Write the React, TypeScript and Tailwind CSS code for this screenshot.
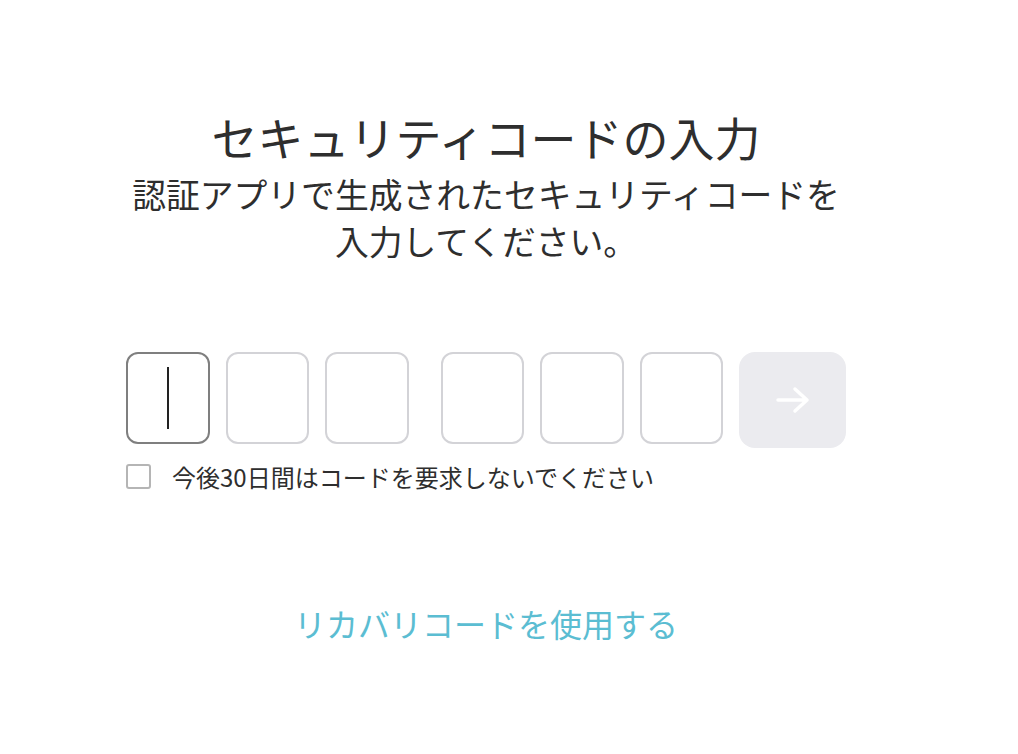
import { useState } from "react";

const font = { fontFamily: '"Noto Sans CJK JP", "Noto Sans", sans-serif' };

const CodeBox = ({ active }: { active?: boolean }) => (
  <div
    className={
      "flex h-[92px] w-[83.5px] items-center justify-center rounded-[12px] border-2 bg-white " +
      (active ? "border-[#7f7f7f]" : "border-[#d3d3d7]")
    }
  >
    {active && <div className="h-[62px] w-[2px] bg-[#222]" />}
  </div>
);

export default function App() {
  const [remember, setRemember] = useState(false);

  return (
    <div className="min-h-[754px] w-full bg-white text-[#2e2e2e]" style={font}>
      <div className="ml-[126px] flex w-[720px] flex-col items-center pt-[108px]">
        <h1 className="text-[46px] leading-[56px] font-normal">セキュリティコードの入力</h1>
        <p className="mt-[6px] text-center text-[33.8px] leading-[47px]">
          認証アプリで生成されたセキュリティコードを
          <br />
          入力してください。
        </p>

        <div className="mt-[88px] flex w-full items-start">
          <div className="flex gap-4">
            <CodeBox active />
            <CodeBox />
            <CodeBox />
          </div>
          <div className="ml-8 flex gap-4">
            <CodeBox />
            <CodeBox />
            <CodeBox />
          </div>
          <button className="ml-4 flex h-[96px] w-[108px] items-center justify-center rounded-[16px] bg-[#ebebef]">
            <svg width="36" height="30" viewBox="0 0 36 30" fill="none" stroke="white" strokeWidth="3.5" strokeLinecap="round" strokeLinejoin="round">
              <path d="M3 15h29M20 4l12 11-12 11" />
            </svg>
          </button>
        </div>

        <label className="mt-4 flex w-full items-center gap-[21px]">
          <input
            type="checkbox"
            checked={remember}
            onChange={(e) => setRemember(e.target.checked)}
            className="h-[25px] w-[25px] appearance-none rounded-[3px] border-2 border-[#b5b5b5] bg-white"
          />
          <span className="text-[24px] leading-[25px]">今後30日間はコードを要求しないでください</span>
        </label>

        <a className="mt-[114px] text-[32px] leading-[40px] text-[#5bbdd2]">リカバリコードを使用する</a>
      </div>
    </div>
  );
}
